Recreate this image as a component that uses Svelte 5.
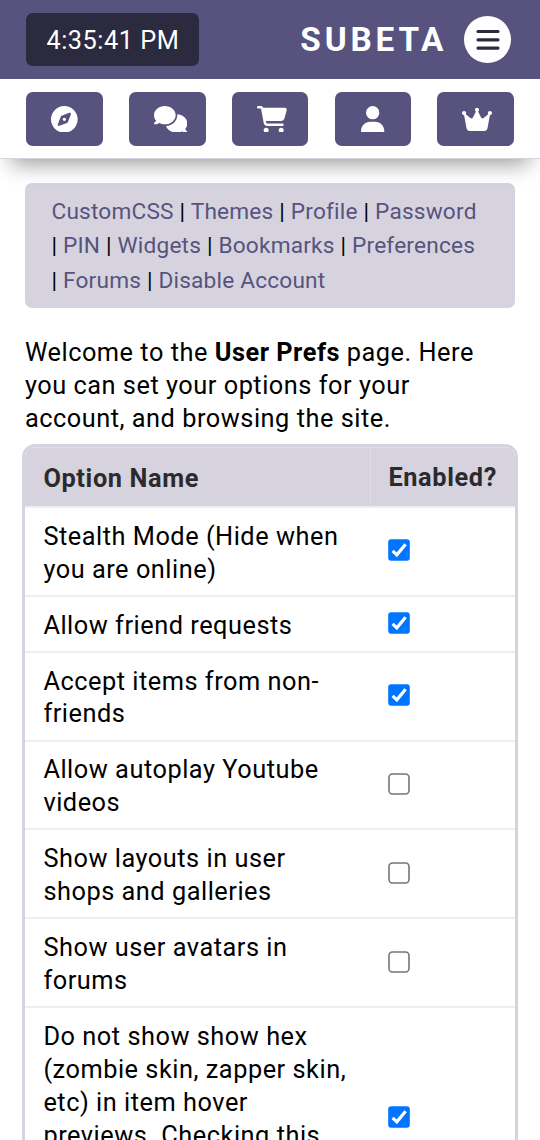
<script>
  const nav = [
    { w: 512, label: 'Explore', d: 'M256 512A256 256 0 1 0 256 0a256 256 0 1 0 0 512zm50.7-186.9L162.4 380.6c-19.4 7.5-38.5-11.6-31-31l55.5-144.3c3.3-8.5 9.9-15.1 18.4-18.4l144.3-55.5c19.4-7.5 38.5 11.6 31 31L325.1 306.7c-3.2 8.5-9.9 15.1-18.4 18.4zM288 256a32 32 0 1 0 -64 0 32 32 0 1 0 64 0z' },
    { w: 640, label: 'Forums', d: 'M208 352c114.9 0 208-78.8 208-176S322.9 0 208 0S0 78.8 0 176c0 38.6 14.7 74.3 39.6 103.4c-3.5 9.4-8.7 17.7-14.2 24.7c-4.8 6.2-9.7 11-13.3 14.3c-1.8 1.6-3.3 2.9-4.3 3.7c-.5 .4-.9 .7-1.1 .8l-.2 .2C1 327.2-1.4 334.4 .8 340.9S9.1 352 16 352c21.8 0 43.8-5.6 62.1-12.5c9.2-3.5 17.8-7.4 25.3-11.4C134.1 343.3 169.8 352 208 352zM448 176c0 112.3-99.1 196.9-216.5 207C255.8 457.4 336.4 512 432 512c38.2 0 73.9-8.7 104.7-23.9c7.5 4 16 7.9 25.2 11.4c18.3 6.9 40.3 12.5 62.1 12.5c6.9 0 13.1-4.5 15.2-11.1c2.1-6.6-.2-13.8-5.8-17.9l-.2-.2c-.2-.2-.6-.4-1.1-.8c-1-.8-2.5-2-4.3-3.7c-3.6-3.3-8.5-8.1-13.3-14.3c-5.5-7-10.7-15.4-14.2-24.7c24.9-29 39.6-64.7 39.6-103.4c0-92.8-84.9-168.9-192.6-175.5c.4 5.1 .6 10.3 .6 15.5z' },
    { w: 576, label: 'Shops', d: 'M0 24C0 10.7 10.7 0 24 0H69.5c22 0 41.5 12.8 50.6 32h411c26.3 0 45.5 25 38.6 50.4l-41 152.3c-8.5 31.4-37 53.3-69.5 53.3H170.7l5.4 28.5c2.2 11.3 12.1 19.5 23.6 19.5H488c13.3 0 24 10.7 24 24s-10.7 24-24 24H199.7c-34.6 0-64.3-24.6-70.7-58.5L77.4 54.5c-.7-3.8-4-6.5-7.9-6.5H24C10.7 48 0 37.3 0 24zM128 464a48 48 0 1 1 96 0 48 48 0 1 1 -96 0zm336-48a48 48 0 1 1 0 96 48 48 0 1 1 0-96z' },
    { w: 448, label: 'Account', d: 'M224 256A128 128 0 1 0 224 0a128 128 0 1 0 0 256zm-45.7 48C79.8 304 0 383.8 0 482.3C0 498.7 13.3 512 29.7 512H418.3c16.4 0 29.7-13.3 29.7-29.7C448 383.8 368.2 304 269.7 304H178.3z' },
    { w: 576, label: 'Premium', d: 'M309 106c11.4-7 19-19.7 19-34c0-22.1-17.9-40-40-40s-40 17.9-40 40c0 14.4 7.6 27 19 34L209.7 220.6c-9.1 18.2-32.7 23.4-48.6 10.7L72 160c5-6.7 8-15 8-24c0-22.1-17.9-40-40-40S0 113.9 0 136s17.9 40 40 40c.2 0 .5 0 .7 0L86.4 427.4c5.5 30.4 32 52.6 63 52.6H426.6c30.9 0 57.4-22.1 63-52.6L535.3 176c.2 0 .5 0 .7 0c22.1 0 40-17.9 40-40s-17.9-40-40-40s-40 17.9-40 40c0 9 3 17.3 8 24l-89.1 71.3c-15.9 12.7-39.5 7.5-48.6-10.7L309 106z' },
  ];
  const links = ['CustomCSS', 'Themes', 'Profile', 'Password', 'PIN', 'Widgets', 'Bookmarks', 'Preferences', 'Forums', 'Disable Account'];
  let options = $state([
    { name: 'Stealth Mode (Hide when you are online)', on: true },
    { name: 'Allow friend requests', on: true },
    { name: 'Accept items from non-friends', on: true },
    { name: 'Allow autoplay Youtube videos', on: false },
    { name: 'Show layouts in user shops and galleries', on: false },
    { name: 'Show user avatars in forums', on: false },
    { name: 'Do not show show hex (zombie skin, zapper skin, etc) in item hover previews. Checking this', on: true, tall: true },
  ]);
</script>

<div class="page">
  <header>
    <div class="clock">4:35:41 PM</div>
    <div class="brand">SUBETA</div>
    <button class="menu" aria-label="Menu">
      <svg viewBox="0 0 24 22"><path d="M2 2.5H22M2 10.8H22M2 19.1H22" /></svg>
    </button>
  </header>
  <nav>
    {#each nav as n}
      <button class="tile" aria-label={n.label}>
        <span class="icon"><svg viewBox="0 0 {n.w} 512" style="width:{n.w / 19.2}px"><path d={n.d} /></svg></span>
      </button>
    {/each}
  </nav>
  <main>
    <div class="links">
      {#each links as l, i}{#if i}{' | '}{/if}<span class="link">{l}</span>{/each}
    </div>
    <p>Welcome to the <b>User Prefs</b> page. Here you can set your options for your account, and browsing the site.</p>
    <div class="table">
      <div class="row head"><div class="name">Option Name</div><div class="flag">Enabled?</div></div>
      {#each options as o}
        <div class="row" class:tall={o.tall}>
          <div class="name">{o.name}</div>
          <div class="flag">
            <button class="check" role="checkbox" aria-checked={o.on} aria-label={o.name} onclick={() => (o.on = !o.on)}>
              <svg viewBox="0 0 22 22">
                {#if o.on}
                  <rect x=".2" y=".2" width="21.6" height="21.6" rx="3" fill="#0075ff" />
                  <path d="M4.6 11.8L8.8 15.8L17.6 5.2" fill="none" stroke="#fff" stroke-width="3.2" />
                {:else}
                  <rect x="1" y="1" width="20" height="20" rx="3.4" fill="#fff" stroke="#767676" stroke-width="1.6" />
                {/if}
              </svg>
            </button>
          </div>
        </div>
      {/each}
    </div>
  </main>
</div>

<style>
  :global(body) { margin: 0; background: #fff; }
  .page {
    width: 540px; height: 1140px; overflow: hidden; background: #fff; color: #000;
    font-family: Roboto, sans-serif; font-size: 25.33px; line-height: 32.93px; letter-spacing: 0.52px;
  }
  .page, .page * { box-sizing: border-box; }
  button { border: 0; padding: 0; margin: 0; }
  header { height: 79.4px; background: #57537e; display: flex; align-items: center; padding: 0 29px 0 26.4px; color: #fff; }
  .clock { width: 173px; height: 53.3px; border-radius: 6.7px; background: #2c2a3e; line-height: 55px; text-align: center; }
  .brand { margin-left: auto; font-weight: 700; font-size: 33.33px; letter-spacing: 3.8px; line-height: 40px; }
  .menu { width: 46.7px; height: 46.7px; border-radius: 50%; background: #fff; margin-left: 17px; display: flex; align-items: center; justify-content: center; }
  .menu svg { width: 24px; height: 22px; fill: none; stroke: #2c2a3e; stroke-width: 3.2; stroke-linecap: round; }
  nav {
    height: 79.2px; background: #fff; border-bottom: 1px solid #d6d3de; display: flex; justify-content: space-between;
    padding: 13px 26px 0 26.4px; position: relative; z-index: 1;
    box-shadow: 0 16px 21px -11px rgba(0, 0, 0, 0.4);
  }
  .tile { width: 76.6px; height: 53.2px; border-radius: 6.7px; background: #57537e; display: flex; justify-content: center; align-items: center; }
  .icon { width: 26.67px; height: 26.67px; display: flex; }
  .icon svg { height: 26.67px; flex: none; fill: #fff; margin: 0 auto; }
  main { padding: 24.6px 21.6px 0; }
  .links {
    margin: 0 3.3px; height: 125px; border-radius: 6.7px; background: #d6d3de; padding: 11.8px 34px 0 26.6px;
    font-size: 22.67px; line-height: 34.5px; letter-spacing: 0.19px;
  }
  .link { color: #57537e; }
  p { margin: 28.8px 3.3px 8.2px; }
  .table { border: 3.3px solid #d6d3de; border-radius: 13px; overflow: hidden; }
  .row { display: grid; grid-template-columns: 346px 1fr; min-height: 55.8px; border-bottom: 2px solid #eceef3; }
  .name { padding: 12.8px 18px 8.2px 18.8px; }
  .flag { padding: 10px 0 12px 17.8px; display: flex; align-items: center; }
  .head { background: #d6d3de; color: #2b2b2e; font-weight: 700; letter-spacing: 0.63px; height: 61px; box-shadow: inset 0 1px #e0dde6; }
  .head .name { padding-top: 15.6px; border-right: 1px solid #dedce5; }
  .head .flag { padding-top: 13.6px; padding-bottom: 9px; }
  .row.tall { height: 221px; }
  .check { width: 22px; height: 22px; background: none; }
  .check svg { display: block; width: 22px; height: 22px; }
</style>
